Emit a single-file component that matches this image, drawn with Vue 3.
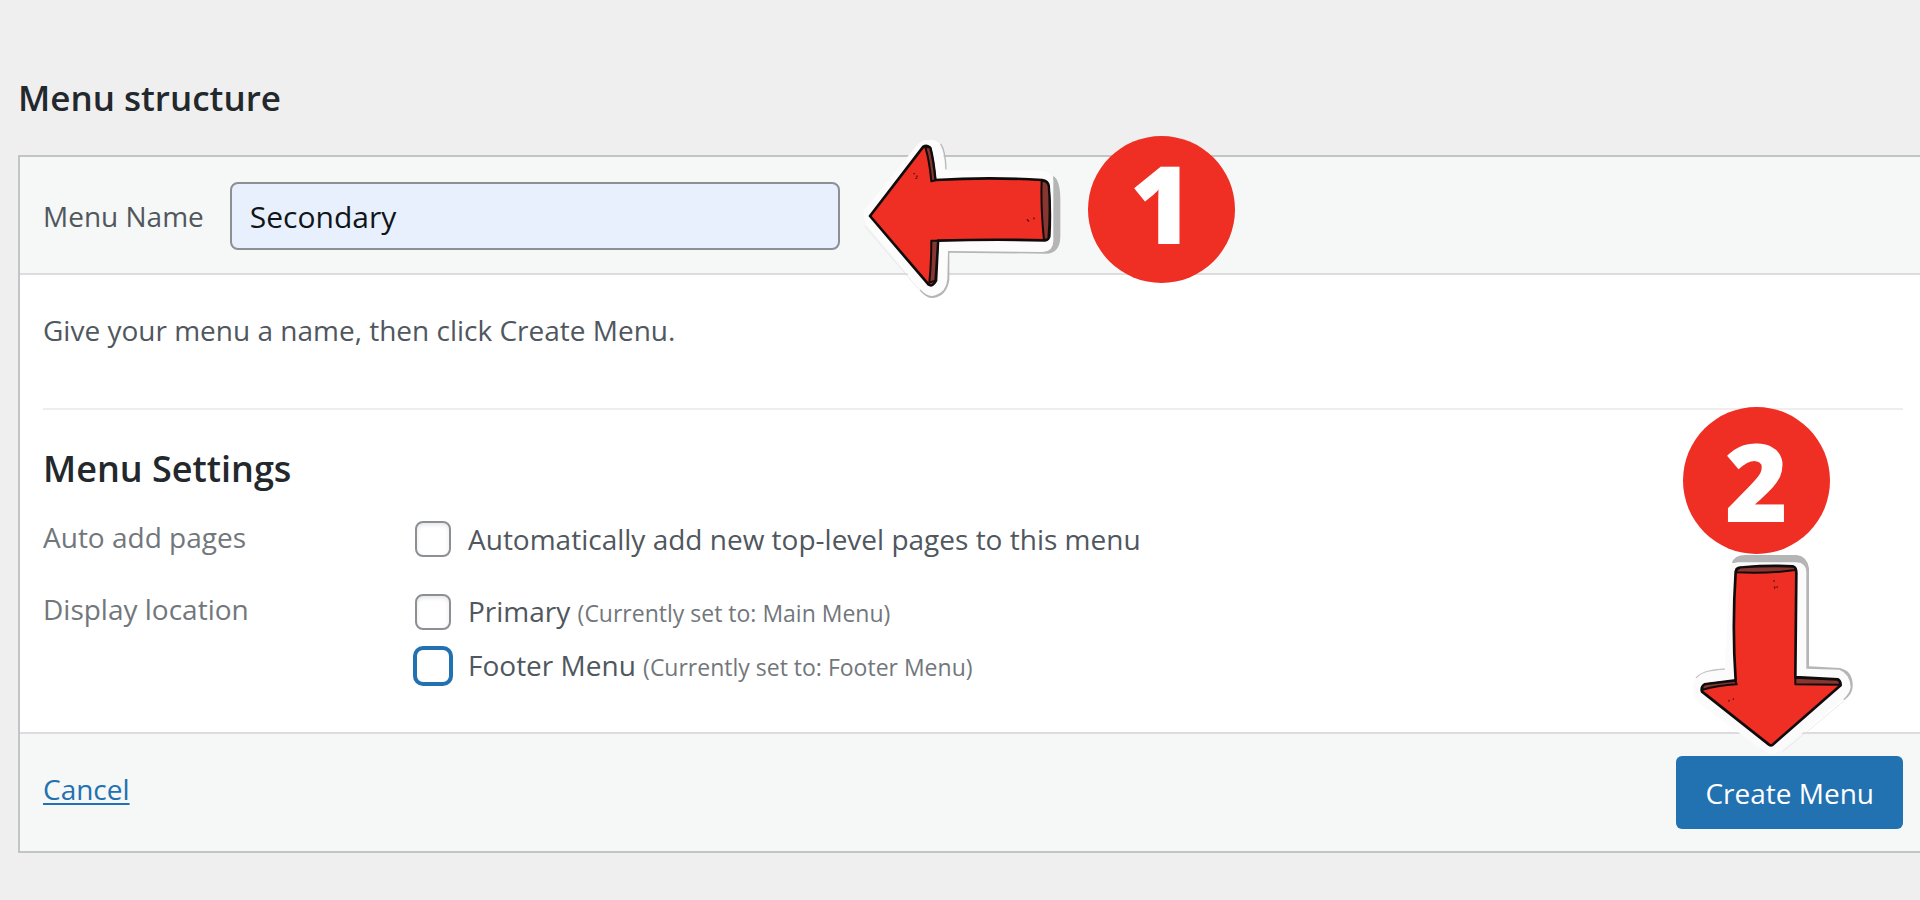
<script setup>
import { ref } from 'vue'

const menuName = ref('Secondary')
const autoAdd = ref(false)
const locations = ref([
  { id: 'primary', name: 'Primary', current: 'Main Menu', checked: false, active: false },
  { id: 'footer', name: 'Footer Menu', current: 'Footer Menu', checked: false, active: true }
])
</script>

<template>
  <main class="page">
    <h2 class="title">Menu structure</h2>
    <form class="panel" @submit.prevent>
      <header class="panel-head">
        <label class="name-label" for="menu-name">Menu Name</label>
        <input id="menu-name" v-model="menuName" class="name-input" type="text" />

        <svg class="arrow-left" viewBox="60 60 612 480" aria-hidden="true">
          <path d="M302 72Q316 92 318 148" fill="none" stroke="#b9b9b9" stroke-width="4" />
          <path d="M640 168Q661 180 661 240V350Q660 400 618 401L328 398V480Q320 530 278 534Q258 534 240 512L250 490L300 380L620 370Z" fill="#b5b5b5" />
          <path d="M74 318L240 512" fill="none" stroke="#e2dcda" stroke-width="2" />
          <path d="M72 270Q66 290 78 312L240 506Q262 534 286 526Q319 516 322 478L324 393L608 396Q640 394 640 362V180Q634 154 606 152L314 152Q314 90 296 68Q262 46 234 72Z" fill="#fbfcfb" />
          <path d="M90 288L250 80Q262 73 271 84Q280 118 286 180Q450 170 606 180Q624 182 626 198Q632 270 628 348Q626 360 614 361Q460 357 294 362L288 482Q278 501 266 494Z" fill="#ef2e24" stroke="#100c0b" stroke-width="8" stroke-linejoin="round" />
          <path d="M256 82Q268 120 274 184L286 181Q280 118 270 82ZM605 182Q602 265 612 360L625 357Q632 270 626 198Q623 182 605 182ZM274 362Q274 430 268 488L286 482L294 362Z" fill="#873632" stroke="#100c0b" stroke-width="6" stroke-linejoin="round" />
          <path d="M222 161h1M231 168v2M228 175h2M562 299l4 4M582 294v2" fill="none" stroke="#4b100d" stroke-width="4" stroke-linecap="round" />
        </svg>
        <span class="badge badge-one"><b>1</b></span>
      </header>

      <section class="panel-body">
        <p class="hint">Give your menu a name, then click Create Menu.</p>
        <div class="settings">
          <h3 class="subtitle">Menu Settings</h3>
          <div class="group" role="group" aria-labelledby="auto-title">
            <span id="auto-title" class="group-title">Auto add pages</span>
            <div class="options">
              <div class="option">
                <input id="auto-add" v-model="autoAdd" class="check" type="checkbox" />
                <label for="auto-add">Automatically add new top-level pages to this menu</label>
              </div>
            </div>
          </div>
          <div class="group" role="group" aria-labelledby="location-title">
            <span id="location-title" class="group-title">Display location</span>
            <div class="options">
              <div v-for="item in locations" :key="item.id" class="option">
                <input :id="item.id" v-model="item.checked" class="check" :class="{ active: item.active }" type="checkbox" />
                <label :for="item.id">{{ item.name }} <span class="current">(Currently set to: {{ item.current }})</span></label>
              </div>
            </div>
          </div>
        </div>
      </section>

      <footer class="panel-foot">
        <a class="cancel" href="#">Cancel</a>
        <button class="create" type="submit">Create Menu</button>
        <svg class="arrow-down" viewBox="150 30 510 615" aria-hidden="true">
          <path d="M276 66Q282 42 316 42H470Q502 46 507 82V376L600 381Q640 390 638 438Q636 462 612 478L598 450L480 400L470 66Z" fill="#b5b5b5" />
          <path d="M256 384Q184 388 168 412" fill="none" stroke="#c4c4c4" stroke-width="4" />
          <path d="M612 480L428 632" fill="none" stroke="#e7dfdb" stroke-width="2" />
          <path d="M270 82Q272 64 294 64H470Q498 66 499 92V383L598 386Q630 398 632 438Q630 458 608 476L424 628Q394 650 362 624L174 484Q150 458 162 424Q174 398 204 392L254 387Z" fill="#fafbfa" />
          <path d="M290 84Q295 79 310 79Q390 72 458 76Q469 79 469 96L466 408L594 415Q602 420 602 433L398 611Q393 615 387 611L186 452Q182 438 194 430L287 418Q276 260 287 92Z" fill="#ef2e24" stroke="#100c0b" stroke-width="8" stroke-linejoin="round" />
          <path d="M288 94Q290 80 310 79Q390 73 458 77Q468 80 466 87Q380 99 288 94ZM466 410L592 416Q602 422 600 431L466 430ZM188 446Q184 434 196 430L286 419L290 430Q230 434 188 446Z" fill="#873632" stroke="#100c0b" stroke-width="6" stroke-linejoin="round" />
          <path d="M402 119v2M404 138v3M411 138h1M267 478v2M280 474v1" fill="none" stroke="#4b100d" stroke-width="4" stroke-linecap="round" />
        </svg>
        <span class="badge badge-two"><b>2</b></span>
      </footer>
    </form>
  </main>
</template>

<style>
body {
  background: #efefef;
}
</style>

<style scoped>
.page {
  padding: 76px 0 48px 18px;
  font-family: "Open Sans", "Noto Sans", sans-serif;
  font-size: 28px;
  line-height: 40px;
  color: #50575e;
}
.title,
.subtitle {
  margin: 0;
  font-size: 36px;
  line-height: 44px;
  font-weight: 600;
  color: #23282d;
}
.title {
  margin-bottom: 35px;
  font-size: 35px;
}
.panel {
  border: 2px solid #c3c4c7;
  border-right: 0;
  background: #fff;
}
.panel-head,
.panel-foot {
  position: relative;
  display: flex;
  align-items: center;
  background: #f6f7f7;
}
.panel-head {
  gap: 26px;
  padding: 25px 23px 23px;
  border-bottom: 2px solid #dcdcde;
}
.name-input {
  box-sizing: border-box;
  width: 610px;
  height: 68px;
  padding: 0 18px;
  border: 2px solid #8c8f94;
  border-radius: 8px;
  background: #e8f0fe;
  color: #101517;
  font: inherit;
  font-size: 30px;
}
.panel-body {
  padding: 35px 17px 43px 23px;
}
.hint {
  margin: 0 0 58px;
}
.settings {
  padding-top: 37px;
  border-top: 2px solid #eeeeef;
}
.group {
  display: grid;
  grid-template-columns: 372px 1fr;
  margin-top: 28px;
}
.subtitle + .group {
  margin-top: 26px;
}
.group-title {
  color: #72777c;
}
.options {
  display: grid;
  gap: 8px;
}
.option {
  display: flex;
  align-items: center;
  gap: 17px;
  line-height: 44px;
}
.check {
  appearance: none;
  box-sizing: border-box;
  width: 36px;
  height: 36px;
  margin: 0;
  border: 2px solid #8c8f94;
  border-radius: 8px;
  background: #fff;
  box-shadow: inset 0 2px 4px rgba(0, 0, 0, 0.1);
}
.check.active {
  border-color: #2271b1;
  box-shadow: 0 0 0 2px #2271b1;
}
.current {
  font-size: 23px;
  color: #72777c;
}
.panel-foot {
  justify-content: space-between;
  padding: 22px 17px 22px 23px;
  border-top: 2px solid #dcdcde;
}
.cancel {
  padding-bottom: 8px;
  color: #2271b1;
  text-underline-offset: 3px;
}
.create {
  height: 73px;
  padding: 0 29px;
  border: 0;
  border-radius: 6px;
  background: #2271b1;
  color: #fff;
  font: inherit;
}
.arrow-left,
.arrow-down,
.badge {
  position: absolute;
  pointer-events: none;
}
.arrow-left {
  top: -17px;
  left: 840px;
  width: 204px;
  height: 160px;
}
.arrow-down {
  right: 60px;
  bottom: 95px;
  width: 170px;
  height: 205px;
}
.badge {
  box-sizing: border-box;
  display: flex;
  align-items: center;
  justify-content: center;
  width: 147px;
  height: 147px;
  border-radius: 50%;
  background: #ef2e24;
  color: #fff;
  font-size: 108px;
  line-height: 108px;
}
.badge b {
  font-weight: 800;
}
.badge-one {
  top: -21px;
  left: 1068px;
  padding-bottom: 14px;
}
.badge-two {
  right: 90px;
  bottom: 297px;
}
</style>
